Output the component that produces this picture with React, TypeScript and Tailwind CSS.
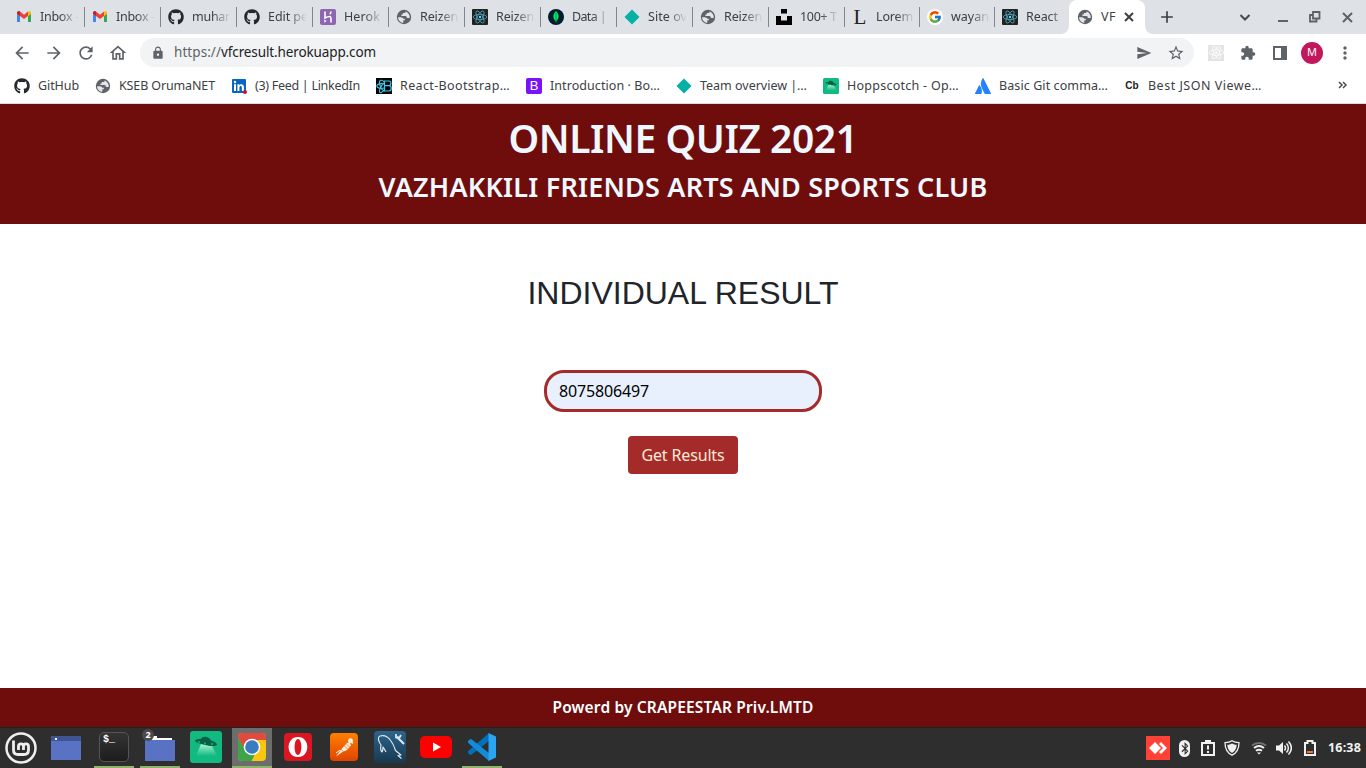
import { useLayoutEffect, useRef, useState } from 'react';
import type { ReactNode } from 'react';
import { FaGithub, FaReact, FaBluetoothB } from 'react-icons/fa';
import { SiUnsplash, SiAtlassian } from 'react-icons/si';
import { FcGoogle } from 'react-icons/fc';
import { MdLock, MdExtension, MdArrowBack, MdArrowForward, MdRefresh, MdOutlineHome, MdStarOutline, MdMoreVert, MdSend, MdAdd } from 'react-icons/md';

/* Tracks its text so that the line fills the given width. */
function Fit({ text, width, className = '' }: { text: string; width: number; className?: string }) {
  const ref = useRef<HTMLSpanElement>(null);
  const [spacing, setSpacing] = useState(0);
  useLayoutEffect(() => {
    if (ref.current) {
      setSpacing((width - ref.current.getBoundingClientRect().width) / text.length);
    }
  }, [text, width]);
  return (
    <span className="block shrink-0 whitespace-nowrap" style={{ width }}>
      <span ref={ref} className={`inline-block ${className}`} style={{ letterSpacing: spacing }}>{text}</span>
    </span>
  );
}

const Gmail = () => (
  <svg className="h-4 w-4" viewBox="0 0 16 16">
    <path d="M1 4v9h3V7z" fill="#4285f4" />
    <path d="M15 4v9h-3V7z" fill="#34a853" />
    <path d="M1 4c0-2 2-2.2 3-1.4L8 5.8l4-3.2V7L8 10 4 7 1 4.8z" fill="#ea4335" />
    <path d="M12 2.6c1-.8 3-.6 3 1.4v.9L12 7z" fill="#fbbc04" />
    <path d="M1 4c0-2 2-2.2 3-1.4V7L1 4.8z" fill="#c5221f" />
  </svg>
);
const Globe = () => (
  <svg className="h-4 w-4" viewBox="0 0 16 16">
    <circle cx="8" cy="8" r="7.200" fill="#5f6368" />
    <path d="M8.800 2.300 6.800 4.200v1.600L8 6.600l1.800.2.600 1.400 1.600.3 1.900-.8c.1 2.600-1.500 4.600-3.400 5.500l-.9-1.300.2-1.500-1.300-.8H7l-.4-1.500-1.500-.8-2.900.4c.1-2.900 2.300-5.700 6.600-5.400z" fill="none" />
    <path d="M2.100 8.200h2.700c1.500.1 2.200.7 2.400 1.600h1.600v1.500H7.300v2.500c-3-.2-5.300-2.600-5.200-5.600zM9.600 2.400c-.1 1-.4 1.600-1.300 1.700H6.800v1.500H5.400v1.300h4.100c.9.200 1.300.9 1.300 1.600v.6h3c.3-3-1.500-5.700-4.200-6.700z" fill="#e3e5e9" />
  </svg>
);
const Github = () => <FaGithub className="h-4 w-4 text-[#24292f]" />;
const ReactBox = () => (
  <span className="flex h-4 w-4 items-center justify-center rounded-[1px] bg-[#222]">
    <svg className="h-4 w-4" viewBox="0 0 16 16" fill="none" stroke="#50a9bf" strokeWidth=".8">
      <ellipse cx="8" cy="8" rx="6.800" ry="2.600" /><ellipse cx="8" cy="8" rx="6.800" ry="2.600" transform="rotate(60 8 8)" /><ellipse cx="8" cy="8" rx="6.800" ry="2.600" transform="rotate(120 8 8)" />
      <circle cx="8" cy="8" r="1.200" fill="#61dafb" stroke="none" />
    </svg>
  </span>
);
const Heroku = () => (
  <span className="flex h-4 w-4 items-center justify-center rounded-[2px] bg-[#8c66b0]">
    <svg className="h-4 w-4" viewBox="0 0 16 16" fill="none" stroke="#fff" strokeWidth="1.600">
      <path d="M5 2.500V9c4-2 6-2 6 .5v4M11 2.500c0 1.400-.4 2-1.200 2.800" /><path d="M4.300 10.400 6.600 12 4.300 13.700z" fill="#fff" stroke="none" />
    </svg>
  </span>
);
const Mongo = () => (
  <svg className="h-4 w-4" viewBox="0 0 16 16">
    <circle cx="8" cy="8" r="8" fill="#001e2b" />
    <path d="M8 2c1.800 2 2.600 3.600 2.600 5.500S9.500 11 8.300 12v1.500h-.6V12C6.500 11 5.400 9.500 5.400 7.500S6.200 4 8 2z" fill="#00ed64" />
    <path d="M8 4v9" stroke="#00684a" strokeWidth=".7" />
  </svg>
);
const Diamond = () => <svg className="h-4 w-4" viewBox="0 0 16 16"><path d="M8 .5 15.500 8 8 15.500.5 8z" fill="#05b0a5" /></svg>;
const Letter = () => <span className="flex h-4 w-4 items-center justify-center font-['Liberation_Serif',serif] text-[21px] leading-4 text-[#222]">L</span>;
const Google = () => <span className="flex h-4 w-4 items-center justify-center rounded-full bg-white"><FcGoogle className="h-[14px] w-[14px]" /></span>;
const Ufo = ({ className }: { className: string }) => (
  <svg className={className} viewBox="0 0 32 32">
    <rect width="32" height="32" rx="3" fill="#12b981" />
    <defs><linearGradient id="ufoBeam" x1="0" y1="0" x2="0" y2="1"><stop stopColor="#a7f3d0" /><stop offset="1" stopColor="#12b981" /></linearGradient></defs>
    <path d="M11 13h10l6 12H6z" fill="url(#ufoBeam)" />
    <path d="M5 9.500c1.500-1.500 4-1.800 6-1.500 1-3 8-3.500 10 1.500 3 1 6 2.500 6 4-1 2.500-9 1.500-14 0S5 11 5 9.500z" fill="#065f46" />
    <circle cx="9" cy="11" r="1" fill="#12b981" /><circle cx="15" cy="12.500" r="1" fill="#12b981" /><circle cx="22" cy="13" r="1" fill="#12b981" />
  </svg>
);
const LinkedIn = () => (
  <svg className="h-4 w-4" viewBox="0 0 16 16">
    <rect x="1" y="1" width="14" height="14" rx="1" fill="#0a66c2" />
    <path d="M3 6.300h2V13H3zM6.400 6.300h1.900v1c1-1.700 4.600-1.600 4.600 1.600V13h-2V9.500c0-2.200-2.500-2-2.500 0V13h-2z" fill="#fff" />
    <circle cx="4" cy="4" r="1.200" fill="#fff" /><circle cx="14" cy="14" r="2" fill="#d11124" />
  </svg>
);
const ReactBootstrap = () => (
  <svg className="h-4 w-4" viewBox="0 0 16 16">
    <path d="M0 0h16v16H0z" fill="#050505" />
    <g fill="none" stroke="#41c7e8" strokeWidth="1.200">
      <path d="M8.500 3H13c2.500 0 2.500 4.700 0 4.700H8.500zM8.500 7.700H13c3 0 3 5.300 0 5.300H8.500z" />
      <path d="M8 6C5 5 .8 6 .8 8s4.200 3 7.200 2M8 4C6.500 1.500 3 1.500 3.500 5S6 12 8 13M8 5c-2 1.500-5 6-4.500 8.500S6.500 14 8 12" />
    </g>
  </svg>
);
const Bootstrap = () => (
  <span className="flex h-4 w-4 items-center justify-center rounded-[2px] bg-[#7a13f8] font-['Liberation_Sans',sans-serif] text-[13px] leading-4 text-white">B</span>
);
const Codebeautify = () => <span className="flex h-4 w-4 items-center justify-center font-['Liberation_Sans',sans-serif] text-[10px] font-bold leading-4 text-[#222]">Cb</span>;

const tabs: { icon: ReactNode; label: string; width: number; narrow?: boolean }[] = [
  { icon: <Gmail />, label: 'Inbox -', width: 39 },
  { icon: <Gmail />, label: 'Inbox -', width: 39 },
  { icon: <Github />, label: 'muhar', width: 38 },
  { icon: <Github />, label: 'Edit pe', width: 40 },
  { icon: <Heroku />, label: 'Herok', width: 36 },
  { icon: <Globe />, label: 'Reizen', width: 38 },
  { icon: <ReactBox />, label: 'Reizen', width: 38 },
  { icon: <Mongo />, label: 'Data |', width: 34 },
  { icon: <Diamond />, label: 'Site ov', width: 39 },
  { icon: <Globe />, label: 'Reizen', width: 38 },
  { icon: <SiUnsplash className="h-4 w-4 text-black" />, label: '100+ T', width: 37 },
  { icon: <Letter />, label: 'Lorem', width: 37, narrow: true },
  { icon: <Google />, label: 'wayan', width: 38, narrow: true },
];

const bookmarks: { icon: ReactNode; label: string; width: number }[] = [
  { icon: <Github />, label: 'GitHub', width: 41 },
  { icon: <Globe />, label: 'KSEB OrumaNET', width: 96 },
  { icon: <LinkedIn />, label: '(3) Feed | LinkedIn', width: 105 },
  { icon: <ReactBootstrap />, label: 'React-Bootstrap…', width: 110 },
  { icon: <Bootstrap />, label: 'Introduction · Bo…', width: 110 },
  { icon: <Diamond />, label: 'Team overview |…', width: 107 },
  { icon: <Ufo className="h-4 w-4" />, label: 'Hoppscotch - Op…', width: 112 },
  { icon: <SiAtlassian className="h-4 w-4 text-[#2681ff]" />, label: 'Basic Git comma…', width: 109 },
  { icon: <Codebeautify />, label: 'Best JSON Viewe…', width: 114 },
];

function TabBar() {
  return (
    <div className="flex h-[34px] shrink-0 bg-white">
      <div className="flex w-[1069px] items-center overflow-hidden rounded-br-lg bg-[#dee1e6] pl-2">
        {tabs.map((t, i) => (
          <div key={i} className={`flex h-5 shrink-0 items-center border-r border-[#80868b] pl-2 ${t.narrow ? 'w-[75px]' : i === 0 ? 'w-[77px]' : 'w-[76px]'}`}>
            <span className={`shrink-0 ${i === 0 ? '' : '-ml-px'}`}>{t.icon}</span>
            <div className="ml-2 w-10 pt-px [mask-image:linear-gradient(to_right,#000_50%,transparent_97%)]">
              <Fit text={t.label} width={t.width} />
            </div>
          </div>
        ))}
        <div className="flex h-5 shrink-0 items-center pl-[7px]">
          <ReactBox />
          <div className="ml-2 w-10 pt-px [mask-image:linear-gradient(to_right,#000_60%,transparent)]"><Fit text="React" width={32} /></div>
        </div>
      </div>
      <div className="w-[76px] bg-[#dee1e6]">
        <div className="flex h-full items-center rounded-t-lg bg-white pl-2">
          <Globe />
          <span className="ml-2 w-4 pt-px"><Fit text="VF" width={15} /></span>
          <svg className="ml-[5px] h-[14px] w-[14px]" viewBox="0 0 14 14" stroke="#3c4043" strokeWidth="2"><path d="m3 3 8 8M11 3l-8 8" /></svg>
        </div>
      </div>
      <div className="flex flex-1 items-center rounded-bl-lg bg-[#dee1e6]">
        <MdAdd className="ml-3 h-5 w-5 text-[#3c4043]" />
        <svg className="ml-[60px] h-4 w-4" viewBox="0 0 16 16" fill="none" stroke="#45494d" strokeWidth="2"><path d="m3.500 6 4.500 4.500L12.500 6" /></svg>
        <svg className="ml-[22px] h-4 w-4" viewBox="0 0 16 16" fill="#5f6368"><path d="M3 11h10v2H3z" /></svg>
        <svg className="ml-4 h-4 w-4" viewBox="0 0 16 16" fill="none" stroke="#5f6368" strokeWidth="1.800"><path d="M6 3h6.500v6.500H6zM6 6H3v6.500h6.500V10" /></svg>
        <svg className="ml-4 h-4 w-4" viewBox="0 0 16 16" stroke="#5f6368" strokeWidth="2"><path d="m4 4 9 9M13 4l-9 9" /></svg>
      </div>
    </div>
  );
}

function Toolbar() {
  return (
    <div className="flex h-9 shrink-0 items-center bg-white pt-px text-[#5f6368]">
      <MdArrowBack className="ml-3 h-5 w-5" />
      <MdArrowForward className="ml-3 h-5 w-5" />
      <MdRefresh className="ml-3 h-5 w-5" />
      <MdOutlineHome className="ml-3 h-5 w-5" />
      <div className="ml-3 flex h-[29px] w-[1054px] items-center rounded-full bg-[#f1f3f4]">
        <MdLock className="ml-[11px] h-[14px] w-[14px]" />
        <div className="ml-[9px] flex flex-1 text-[13.500px]">
          <Fit text="https://" width={47} /><Fit text="vfcresult.herokuapp.com" width={155} className="text-[#202124]" />
        </div>
        <MdSend className="h-4 w-4" />
        <MdStarOutline className="ml-[15px] mr-[9px] h-[18px] w-[18px]" />
      </div>
      <span className="ml-[14px] flex h-4 w-4 items-center justify-center bg-[#e4e4e4]"><FaReact className="h-[15px] w-[15px] text-white" /></span>
      <MdExtension className="ml-4 h-4 w-4" />
      <svg className="ml-4 h-4 w-4" viewBox="0 0 16 16"><path d="M1 1h14v14H1zM3 3v10h6V3z" fill="#5f6368" fillRule="evenodd" /></svg>
      <span className="ml-[13px] flex h-[22px] w-[22px] items-center justify-center rounded-full bg-[#c2185b] text-[11px] text-white">M</span>
      <MdMoreVert className="ml-3 h-5 w-5" />
    </div>
  );
}

function Bookmarks() {
  return (
    <div className="flex h-[34px] shrink-0 items-center border-b border-[#dadce0] bg-white pl-[14px] pr-[18px]">
      {bookmarks.map((b, i) => (
        <div key={b.label} className={`flex shrink-0 items-center gap-2 pb-[2px] ${i === 8 ? '' : 'mr-4'}`}>
          {b.icon}
          <div className="pt-px"><Fit text={b.label} width={b.width} /></div>
        </div>
      ))}
      <svg className="mb-1 ml-auto h-[10px] w-[10px]" viewBox="0 0 10 10" fill="none" stroke="#4b4f53" strokeWidth="1.500"><path d="m1 2 3 3-3 3M5 2l3 3-3 3" /></svg>
    </div>
  );
}

function Dock({ children, className = '', active = false }: { children: ReactNode; className?: string; active?: boolean }) {
  return (
    <div className={`flex h-10 w-10 shrink-0 items-center justify-center border-b-2 ${active ? 'border-[#8fb36b]' : 'border-transparent'} ${className}`}>{children}</div>
  );
}

const Chrome = () => (
  <svg className="h-[30px] w-[30px]" viewBox="0 0 30 30">
    <defs><clipPath id="chromeTile"><rect x="1" y="1" width="28" height="28" rx="4" /></clipPath></defs>
    <g clipPath="url(#chromeTile)">
      <path d="M0 0h30v30H0z" fill="#f9c80e" /><path d="M0 0h30v8H15L8 18 0 4z" fill="#e34a3f" /><path d="m0 3 8 15 11 2-5 10H0z" fill="#3da447" />
    </g>
    <circle cx="15" cy="15" r="8.300" fill="#fff" /><circle cx="15" cy="15" r="6.800" fill="#397dc0" />
  </svg>
);

function Taskbar() {
  return (
    <div className="flex h-[41px] shrink-0 border-t border-[#222] bg-[#2e2e2e]">
      <Dock className="ml-px">
        <svg className="mt-px h-8 w-8" viewBox="0 0 32 32" fill="none" stroke="#eee">
          <circle cx="16" cy="16" r="14.500" strokeWidth="2.500" />
          <path d="M8.500 8.500V18c0 3.500 1.500 4.500 4.500 4.500h6c3 0 4.500-1.500 4.500-4.500v-3.500c0-3.500-5-3.500-5 0V18v-3.500c0-3.500-5-3.500-5 0V18" strokeWidth="2.800" />
        </svg>
      </Dock>
      <Dock className="ml-[5px]"><svg className="mt-[2px] h-6 w-[30px]" viewBox="0 0 30 24"><path d="M0 0h30v24H0z" fill="#5972c3" /><path d="M0 0h30v5H0z" fill="#3f5493" /><path d="M4 2h2v2H4z" fill="#fff" /></svg></Dock>
      <Dock active className="ml-2"><span className="h-[30px] w-[30px] rounded-[5px] border border-[#555] bg-linear-to-b from-[#343434] to-[#1d1d1d] pl-[3px] pt-px font-['Liberation_Mono',monospace] text-[10px] font-bold leading-3 text-white">$_</span></Dock>
      <Dock active className="relative ml-[6px]">
        <svg className="mt-px h-[26px] w-[30px]" viewBox="0 0 30 26"><path d="M0 1h12v2h15v5H0z" fill="#fff" /><path d="M0 5h30v21H0z" fill="#5972c3" /></svg>
        <span className="absolute left-[2px] top-px flex h-3 w-3 items-center justify-center rounded-full bg-[#4b4b4b] text-[9px] font-bold text-white">2</span>
      </Dock>
      <Dock className="ml-[6px]"><Ufo className="h-8 w-8" /></Dock>
      <Dock active className="ml-[6px] bg-[#6d6d6d]"><Chrome /></Dock>
      <Dock className="ml-[6px]"><svg className="h-7 w-7" viewBox="0 0 28 28"><rect width="28" height="28" rx="4" fill="#da1720" /><path fillRule="evenodd" d="M14 4c12.500 0 12.500 20 0 20S1.500 4 14 4zm0 2c-4.500 0-4.500 16 0 16s4.500-16 0-16z" fill="#fff" /></svg></Dock>
      <Dock className="ml-[6px]">
        <svg className="h-7 w-7" viewBox="0 0 28 28">
          <defs><linearGradient id="postmanTile" x1="0" y1="0" x2="0" y2="1"><stop stopColor="#ff8000" /><stop offset="1" stopColor="#e04400" /></linearGradient></defs>
          <rect width="28" height="28" rx="4" fill="url(#postmanTile)" />
          <path d="m6 23.500 5-7 6-6.500 2.500-.5 1.500 3-4 4.500-4.500 2z" fill="#fff0dc" /><path d="m11 16 2.500 3M14 12.500l3.500 3.500M16.500 11l3 3" stroke="#e9701c" strokeWidth=".8" /><path d="m22 11 1-2M6 20l4-3" stroke="#fff0dc" /><circle cx="20.500" cy="7.800" r="2.500" fill="#fff0dc" />
        </svg>
      </Dock>
      <Dock className="ml-[6px]">
        <span className="flex h-8 w-8 items-center justify-center rounded-[4px] bg-linear-to-b from-[#2d648e] to-[#19394f]">
          <svg className="h-8 w-8" viewBox="0 0 32 32" fill="none" stroke="#dce8f0" strokeWidth="1.200" strokeLinejoin="round">
            <path d="M12 21c-1-2-1.500-3-3-5 .2 2-.3 3.500-1 5-1.500-1-1.500-4-1-7C4 10 3.500 6 6 5c4-1 8 .5 11 5 3 4 3.500 7 4.500 9.500L27 24l-3 .5 3.500 3" />
            <path d="m23 6 3 3 4 4" strokeWidth="2.200" /><path d="M22 3v3.500h3.500L27 4" strokeWidth="1.800" />
          </svg>
        </span>
      </Dock>
      <Dock className="ml-[6px]"><svg className="h-[22px] w-8" viewBox="0 0 32 22"><rect width="32" height="22" rx="5" fill="#f00" /><path d="m13 6.500 8 4.500-8 4.500z" fill="#fff" /></svg></Dock>
      <Dock active className="ml-[6px]">
        <svg className="h-7 w-7" viewBox="0 0 28 28">
          <path d="M21 0 0 18.200V20l2 1.800h1.500L21 8z" fill="#0070b8" /><path d="M21 28 0 9.800V8l2-1.800h1.500L21 20z" fill="#148bd4" /><path d="m20.500 0 7.500 3.500v21L20.500 28z" fill="#2ba4f2" />
        </svg>
      </Dock>
      <div className="ml-auto flex items-center pr-[5px] text-[#f1f1f1]">
        <svg className="h-6 w-6" viewBox="0 0 24 24"><path d="M0 0h24v24H0z" fill="#ff4136" /><path d="m9 6 6 6-6 6-6-6zM13 8l2-2 6 6-6 6-2-2 4-4z" fill="#fff" /></svg>
        <span className="ml-[9px] flex h-[17px] w-[11px] items-center justify-center rounded-full bg-[#f1f1f1]"><FaBluetoothB className="h-[13px] w-[10px] text-[#2e2e2e]" /></span>
        <svg className="ml-[11px] h-4 w-[14px]" viewBox="0 0 14 16"><path d="M1 3h12v12H1z" fill="none" stroke="#f1f1f1" strokeWidth="2" /><path d="M4 0h6v4H4zM6 5.500h2v4H6zM6 11h2v2H6z" fill="#f1f1f1" /></svg>
        <svg className="ml-[9px] h-4 w-4" viewBox="0 0 16 16"><path d="M8 .8c2 1.500 4.500 1.900 7 1.900 0 6-2 10-7 12.500C3 12.700 1 8.700 1 2.700c2.500 0 5-.4 7-1.900z" fill="none" stroke="#f1f1f1" strokeWidth="1.300" /><path d="M8 3.500c1.500 1 3 1.200 4.700 1.300-.3 4-1.700 6.500-4.700 8.200-3-1.700-4.400-4.200-4.700-8.200C5 4.700 6.500 4.500 8 3.500z" fill="#f1f1f1" /></svg>
        <svg className="ml-[11px] h-4 w-4" viewBox="0 0 16 16" fill="none" stroke="#f1f1f1" strokeWidth="2"><path d="M1 5.500c4-3.500 10-3.500 14 0" opacity=".35" /><path d="M3 8c3-2.500 7-2.500 10 0M5 10.800c2-1.500 4-1.500 6 0" /><path d="m6 12.500 2 2 2-2z" fill="#f1f1f1" stroke="none" /></svg>
        <svg className="ml-[9px] h-4 w-4" viewBox="0 0 16 16" fill="none" stroke="#f1f1f1" strokeWidth="1.500"><path d="M0 5.500h3L7 2v12l-4-3.500H0z" fill="#f1f1f1" stroke="none" /><path d="M8.500 5.500c1.200 1.500 1.200 3.500 0 5M10.500 3.500c2.500 2.500 2.500 6.500 0 9M12.500 1.500c3.500 4 3.500 9 0 13" /></svg>
        <svg className="ml-3 h-4 w-3" viewBox="0 0 12 16"><path d="M1 3h2.500V1h5v2H11v12H1z" fill="none" stroke="#f1f1f1" strokeWidth="2" /><path d="M3 11h6v2H3z" fill="#f37329" /></svg>
        <div className="ml-3 text-[12.500px] font-bold"><Fit text="16:38" width={33} /></div>
      </div>
    </div>
  );
}

export default function App() {
  return (
    <div className="flex h-screen w-full flex-col overflow-hidden bg-white font-['Noto_Sans',sans-serif] text-[12.500px] text-[#3c4043]">
      <TabBar />
      <Toolbar />
      <Bookmarks />
      <header className="flex h-[120px] shrink-0 flex-col items-center bg-[#6f0d0d] pt-[10px] text-[#f0f8ff]">
        <h1 className="text-[39px] font-semibold leading-[48px]"><Fit text="ONLINE QUIZ 2021" width={349} /></h1>
        <h2 className="mt-2 text-[27px] font-semibold leading-[34px]"><Fit text="VAZHAKKILI FRIENDS ARTS AND SPORTS CLUB" width={609} /></h2>
      </header>
      <main className="flex min-h-0 flex-1 flex-col items-center pt-[50px]">
        <h3 className="font-['Liberation_Sans',sans-serif] text-[32px] leading-[38px] text-[#212529]">INDIVIDUAL RESULT</h3>
        <div className="mt-[58px] flex h-[42px] w-[278px] items-center rounded-[20px] border-3 border-[#a52a2a] bg-[#e8f0fe] pl-3 text-base text-black">
          <Fit text="8075806497" width={90} />
        </div>
        <button className="mt-6 flex h-[38px] w-[110px] items-center justify-center rounded bg-[#a52a2a] text-[16px] text-[#faebd7]"><Fit text="Get Results" width={83} /></button>
      </main>
      <footer className="flex h-[39px] shrink-0 items-center justify-center bg-[#6f0d0d] text-[15.500px] font-semibold text-white"><Fit text="Powerd by CRAPEESTAR Priv.LMTD" width={261} /></footer>
      <Taskbar />
    </div>
  );
}
